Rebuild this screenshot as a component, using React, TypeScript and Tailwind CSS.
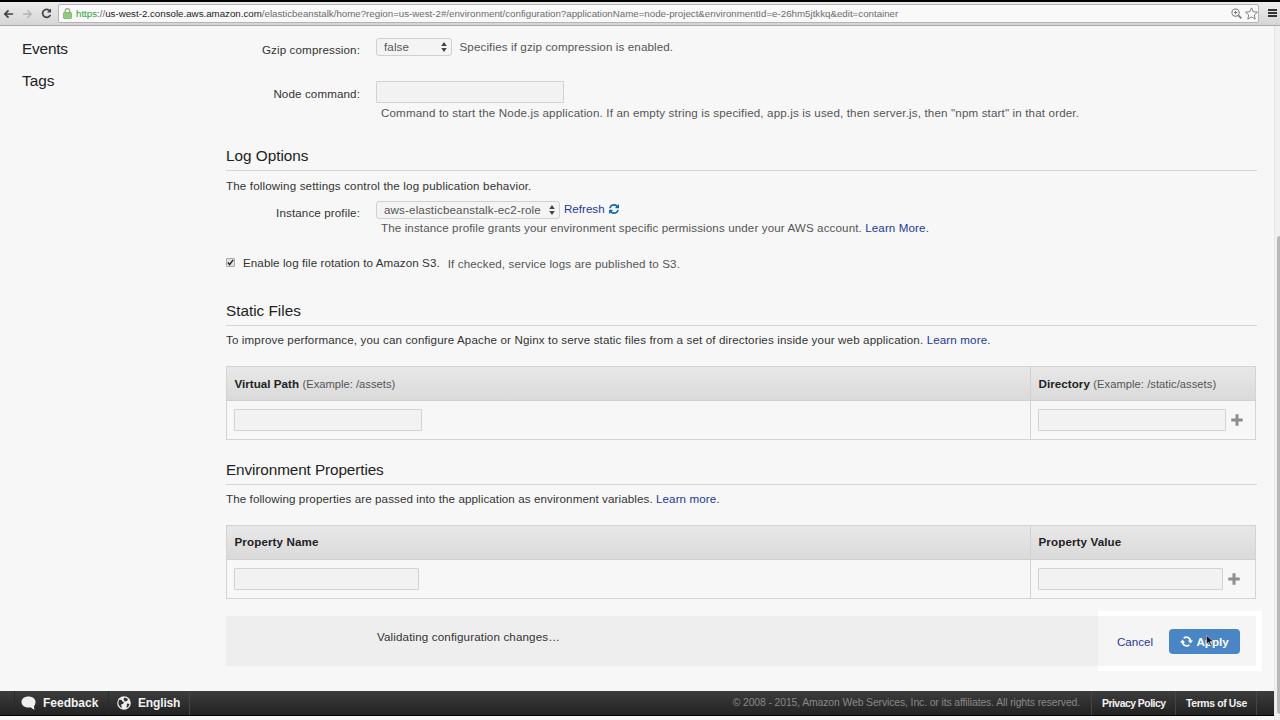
import React from "react";

function Refresh({ className }: { className: string }) {
  return (
    <svg viewBox="0 0 1536 1536" className={className} fill="currentColor" aria-hidden="true">
      <path d="M1511 928q0 5-1 7-64 268-268 434.500T764 1536q-146 0-282.500-55T238 1324l-129 129q-19 19-45 19t-45-19-19-45V960q0-26 19-45t45-19h448q26 0 45 19t19 45-19 45l-137 137q71 66 161 102t187 36q134 0 250-65t186-179q11-17 53-117 8-23 30-23h192q13 0 22.500 9.500t9.500 22.500zm25-800v448q0 26-19 45t-45 19h-448q-26 0-45-19t-19-45 19-45l138-138Q969 256 768 256q-134 0-250 65T332 500q-11 17-53 117-8 23-30 23H50q-13 0-22.500-9.500T18 608v-7q65-268 270-434.500T768 0q146 0 284 55.500T1297 212l130-129q19-19 45-19t45 19 19 45z" />
    </svg>
  );
}

function Cycle({ className }: { className: string }) {
  return (
    <svg viewBox="0 0 13 11" className={className} fill="none" stroke="currentColor" strokeWidth="1.700" aria-hidden="true">
      <path d="M2.500 5.800A4.100 4.100 0 0 0 9.300 8.800M10.500 5.200A4.100 4.100 0 0 0 3.700 2.200" />
      <path d="M0 6.600h5L2.500 3.600zM13 4.400H8l2.500 3z" fill="currentColor" stroke="none" />
    </svg>
  );
}

function UpDown({ className }: { className: string }) {
  return (
    <svg viewBox="0 0 6 10" className={className} fill="#444" aria-hidden="true">
      <path d="M3 0 5.8 4H.2zM3 10 .2 6h5.6z" />
    </svg>
  );
}

function Plus() {
  return (
    <svg viewBox="0 0 12 12" className="size-3 shrink-0" fill="#8e8e8e" aria-hidden="true">
      <path d="M4.500.300h3v4.200h4.200v3H7.500v4.200h-3V7.500H.300v-3h4.200z" />
    </svg>
  );
}

function Field({ width }: { width: string }) {
  return <input aria-label="value" className={"block h-[22px] rounded-[1px] border border-[#d2d2d2] bg-[#f2f2f2] " + width} />;
}

function Heading({ children }: { children: React.ReactNode }) {
  return <h2 className="h-[25px] border-b border-[#d4d4d4] text-[15.3px] leading-5 tracking-normal text-[#222]">{children}</h2>;
}

type TableProps = { left: React.ReactNode; right: React.ReactNode; leftWidth: string; rightWidth: string; leading: string };

function FieldTable({ left, right, leftWidth, rightWidth, leading }: TableProps) {
  return (
    <div className="grid h-[74px] w-[1030px] grid-cols-[803px_1fr] grid-rows-[34px_1fr] border border-[#d3d3d3]">
      <div className={"border-b border-[#d0d0d0] bg-linear-to-b from-[#e8e8e8] to-[#dadada] pl-[7.5px] text-[#222] " + leading}>{left}</div>
      <div className={"border-b border-l border-[#d0d0d0] bg-linear-to-b from-[#e8e8e8] to-[#dadada] pl-[7.5px] text-[#222] " + leading}>{right}</div>
      <div className="flex items-center pl-[7px]"><Field width={leftWidth} /></div>
      <div className="flex items-center gap-[5px] border-l border-[#d3d3d3] pl-[7px]"><Field width={rightWidth} /><Plus /></div>
    </div>
  );
}

const link = "text-[#25389c]";

export default function App() {
  return (
    <div className="flex h-[720px] w-[1280px] flex-col overflow-hidden bg-[#f7f7f7] font-['Liberation_Sans',Arial,sans-serif] text-[11.6px] leading-4 whitespace-nowrap text-[#333]">
      <header className="flex h-[26px] shrink-0 items-start border-t-2 border-b border-t-black border-b-[#aaa] bg-linear-to-b from-[#ececec] to-[#d6d6d6] pt-0.5">
        <div className="flex h-[19px] w-[58px] items-center">
          <svg viewBox="0 0 12 10" className="ml-[3px] h-2.5 w-[11px]" fill="none" stroke="#444" strokeWidth="1.9"><path d="M11 5H2M6 1 2 5l4 4" /></svg>
          <svg viewBox="0 0 12 10" className="ml-2 h-2.5 w-[11px]" fill="none" stroke="#b4b4b4" strokeWidth="1.6"><path d="M1 5h9M6 1l4 4-4 4" /></svg>
          <svg viewBox="0 0 12 12" className="ml-2 size-[11px]" fill="none" stroke="#444" strokeWidth="1.9"><path d="M9.5 3A4.4 4.4 0 1 0 10.200 7.500" /><path d="M11 .5V5H6.500z" fill="#444" stroke="none" /></svg>
        </div>
        <div className="flex h-[19px] w-[1201px] items-center rounded-[2px] border border-[#b5b5b5] bg-[#f9f9f9] pl-1">
          <svg viewBox="0 0 9 11" className="h-[11px] w-[9px]" aria-hidden="true"><path d="M2.200 5V3a2.300 2.300 0 0 1 4.600 0v2" fill="none" stroke="#9aa593" strokeWidth="1.200" /><rect x=".5" y="4.500" width="8" height="6" rx=".7" fill="#8fcd7c" stroke="#6cb058" strokeWidth=".7" /></svg>
          <span className="ml-1 text-[9.73px] leading-[17px] text-[#6d6d6d]"><span className="text-[#2f9e3a]">https</span>://<span className="text-[#222]">us-west-2.console.aws.amazon.com</span>/elasticbeanstalk/home?region=us-west-2#/environment/configuration?applicationName=node-project&amp;environmentId=e-26hm5jtkkq&amp;edit=container</span>
          <svg viewBox="0 0 12 12" className="ml-auto size-[11px]" fill="none" stroke="#777" strokeWidth="1.100"><circle cx="5" cy="5" r="4" /><path d="m8 8 3.300 3.300" strokeWidth="1.700" /><path d="M3.200 5h3.600M5 3.200v3.600" /></svg>
          <svg viewBox="0 0 24 24" className="ml-[3px] size-[13px]" fill="none" stroke="#777" strokeWidth="1.700"><path d="m12 1.500 3.200 7.200 7.800.8-5.900 5.200 1.700 7.700L12 18.400l-6.800 4 1.700-7.700L1 9.500l7.800-.8z" /></svg>
        </div>
        <div className="mt-[5px] ml-[9px] flex w-[9px] flex-col gap-[1px]"><i className="h-0.5 bg-[#333]" /><i className="h-0.5 bg-[#333]" /><i className="h-0.5 bg-[#333]" /></div>
      </header>
      <div className="flex min-h-0 flex-1">
        <div className="flex w-[1274px] flex-col">
          <div className="flex h-[665px] shrink-0">
            <nav className="flex w-[226px] shrink-0 flex-col gap-3 pt-[13px] pl-[22px] text-[15.4px] leading-5 text-[#222]"><span className="tracking-[-0.2px]">Events</span><span>Tags</span></nav>
            <main className="w-[1031px] tracking-[0.12px]">
              <div className="flex h-[54px] pt-3">
                <span className="w-[134px] pt-[4px] text-right">Gzip compression:</span>
                <div className="ml-4 flex h-[18px] w-[76px] items-center justify-between rounded-[3px] border border-[#d0d0d0] bg-[#f4f4f4] pr-1 pl-[7px] text-[#555]">false<UpDown className="h-2.5 w-1.5" /></div>
                <span className="ml-[7.5px] pt-px text-[#555]">Specifies if gzip compression is enabled.</span>
              </div>
              <div className="flex h-[66px]">
                <span className="w-[134px] pt-[6px] text-right">Node command:</span>
                <div className="ml-4 pt-px"><Field width="w-[188px]" /><p className="pt-0.5 pl-[5px] tracking-[0.147px] text-[#555]">Command to start the Node.js application. If an empty string is specified, app.js is used, then server.js, then "npm start" in that order.</p></div>
              </div>
              <Heading>Log Options</Heading>
              <p className="h-[30px] pt-[7px] tracking-[0.15px]">The following settings control the log publication behavior.</p>
              <div className="flex h-[54px]">
                <span className="w-[134px] pt-1 text-right">Instance profile:</span>
                <div className="ml-4">
                  <div className="flex h-[18px] items-center">
                    <div className="flex h-[18px] w-[184px] items-center justify-between rounded-[3px] border border-[#d0d0d0] bg-[#f4f4f4] pr-1 pl-[7px] tracking-[0.14px] text-[#555]">aws-elasticbeanstalk-ec2-role<UpDown className="h-2.5 w-1.5" /></div>
                    <a className={"mb-0.5 ml-1 flex items-center gap-1 tracking-normal " + link}>Refresh<Refresh className="size-2.5 text-[#0d66b5]" /></a>
                  </div>
                  <p className="pt-px pl-[5px] tracking-[0.115px] text-[#555]">The instance profile grants your environment specific permissions under your AWS account. <a className={link}>Learn More.</a></p>
                </div>
              </div>
              <div className="flex h-[46px]">
                <span className="mt-[3px] size-[9px] rounded-[1px] border border-[#aaa] bg-[#e2e2e2]"><svg viewBox="0 0 8 8" className="block size-[7px]" fill="none" stroke="#222" strokeWidth="1.600"><path d="m1 4 2 2.500L7 1" /></svg></span>
                <span className="ml-2 tracking-[0.09px]">Enable log file rotation to Amazon S3.</span><span className="ml-2 pt-px text-[#555]">If checked, service logs are published to S3.</span>
              </div>
              <Heading>Static Files</Heading>
              <p className="h-10 pt-1.5 tracking-[0.13px]">To improve performance, you can configure Apache or Nginx to serve static files from a set of directories inside your web application. <a className={link}>Learn more.</a></p>
              <FieldTable leading="leading-[34px]" left={<><b className="tracking-[0.03px]">Virtual Path</b> <span className="text-[11.2px] tracking-[0.01px] text-[#555]">(Example: /assets)</span></>} right={<><b className="tracking-[0.06px]">Directory</b> <span className="text-[11.2px] tracking-[0.04px] text-[#555]">(Example: /static/assets)</span></>} leftWidth="w-[188px]" rightWidth="w-[188px]" />
              <div className="h-5" />
              <Heading><span className="tracking-[-0.1px]">Environment Properties</span></Heading>
              <p className="h-10 pt-[6px] tracking-[0.095px]">The following properties are passed into the application as environment variables. <a className={link}>Learn more.</a></p>
              <FieldTable leading="leading-[32px]" left={<b>Property Name</b>} right={<b>Property Value</b>} leftWidth="w-[185px]" rightWidth="w-[185px]" />
              <div className="mt-3 flex w-[1036px] items-start">
                <div className="mt-[5px] h-[50px] w-[872px] bg-[#eee] pt-[13px] pl-[151px] tracking-[0.14px]">Validating configuration changes…</div>
                <div className="h-[60px] w-[164px] border-y-[5px] border-r-[6px] border-white bg-[#f5f5f5]">
                  <div className="flex h-[50px] items-start pt-[13px] pl-[19px] tracking-normal">
                    <a className={"pt-[5px] " + link}>Cancel</a>
                    <button className="relative ml-4 flex h-[25px] w-[71px] items-center justify-center gap-[3px] rounded-[4px] bg-[#4a86c5] font-bold text-white"><Cycle className="h-[11px] w-[13px]" />Apply
                      <svg viewBox="0 0 9 14" className="absolute top-1.5 left-[37px] h-3 w-2"><path d="M.5.5v10L3 8.300l1.700 4 1.600-.7-1.700-4H8z" fill="#111" stroke="#dde" strokeWidth=".6" /></svg>
                    </button>
                  </div>
                </div>
              </div>
            </main>
          </div>
          <footer className="flex h-[25px] shrink-0 items-center border-b border-black bg-linear-to-b from-[#3d3d3d] to-[#222] text-[#f2f2f2]">
            <div className="ml-3.5 flex h-full w-[95px] items-center gap-[7px] border-x border-[#2b2b2b] pl-1.5 text-[12px] font-bold">
              <svg viewBox="0 0 15 14" className="h-3.5 w-[15px]" fill="#eee"><path d="M7.500.5C3.500.5.5 2.700.5 6s3 5.500 7 5.500c.7 0 1.500-.1 2.200-.2.9 1.200 2.300 2 4 2.200-.7-1-.8-2.200-.6-3.400C14 9 14.500 7.500 14.500 6c0-3.300-3-5.500-7-5.500z" /></svg>Feedback
            </div>
            <div className="flex h-full w-[81px] items-center gap-[7px] border-r border-[#444] pl-2 text-[12px] font-bold tracking-[-0.15px]">
              <svg viewBox="0 0 14 14" className="size-3.5"><circle cx="7" cy="7" r="6.800" fill="#eee" /><path d="M2 4c2-.5 3 .2 3.500 1.500L7 6l-1 2-2 .5 1 3.500C3 11.500 1.300 9 1.300 6.500zM7.500 1.500 11 3l-1 2-2.200.5L6.500 3zM10 7.500l2.500.5-1 2.500-2 1.500z" fill="#303030" /></svg>English
            </div>
            <span className="ml-auto pr-[11px] text-[10.4px] tracking-[-0.11px] text-[#888]">© 2008 - 2015, Amazon Web Services, Inc. or its affiliates. All rights reserved.</span>
            <div className="h-full w-[84px] border-l border-[#444] pl-2.5 text-[10.4px] leading-[25px] font-bold tracking-[-0.5px]">Privacy Policy</div>
            <div className="h-full w-[82px] border-x border-[#444] pl-2.5 text-[10.4px] leading-[25px] font-bold tracking-[-0.35px]">Terms of Use</div>
            <div className="w-[17px]" />
          </footer>
        </div>
        <div className="w-1.5 border-l border-[#e6e6e6] bg-[#f0f0f0] pt-[210px]"><div className="ml-[2px] h-[478px] rounded-l-sm bg-[#b8b8b8]" /></div>
      </div>
    </div>
  );
}
